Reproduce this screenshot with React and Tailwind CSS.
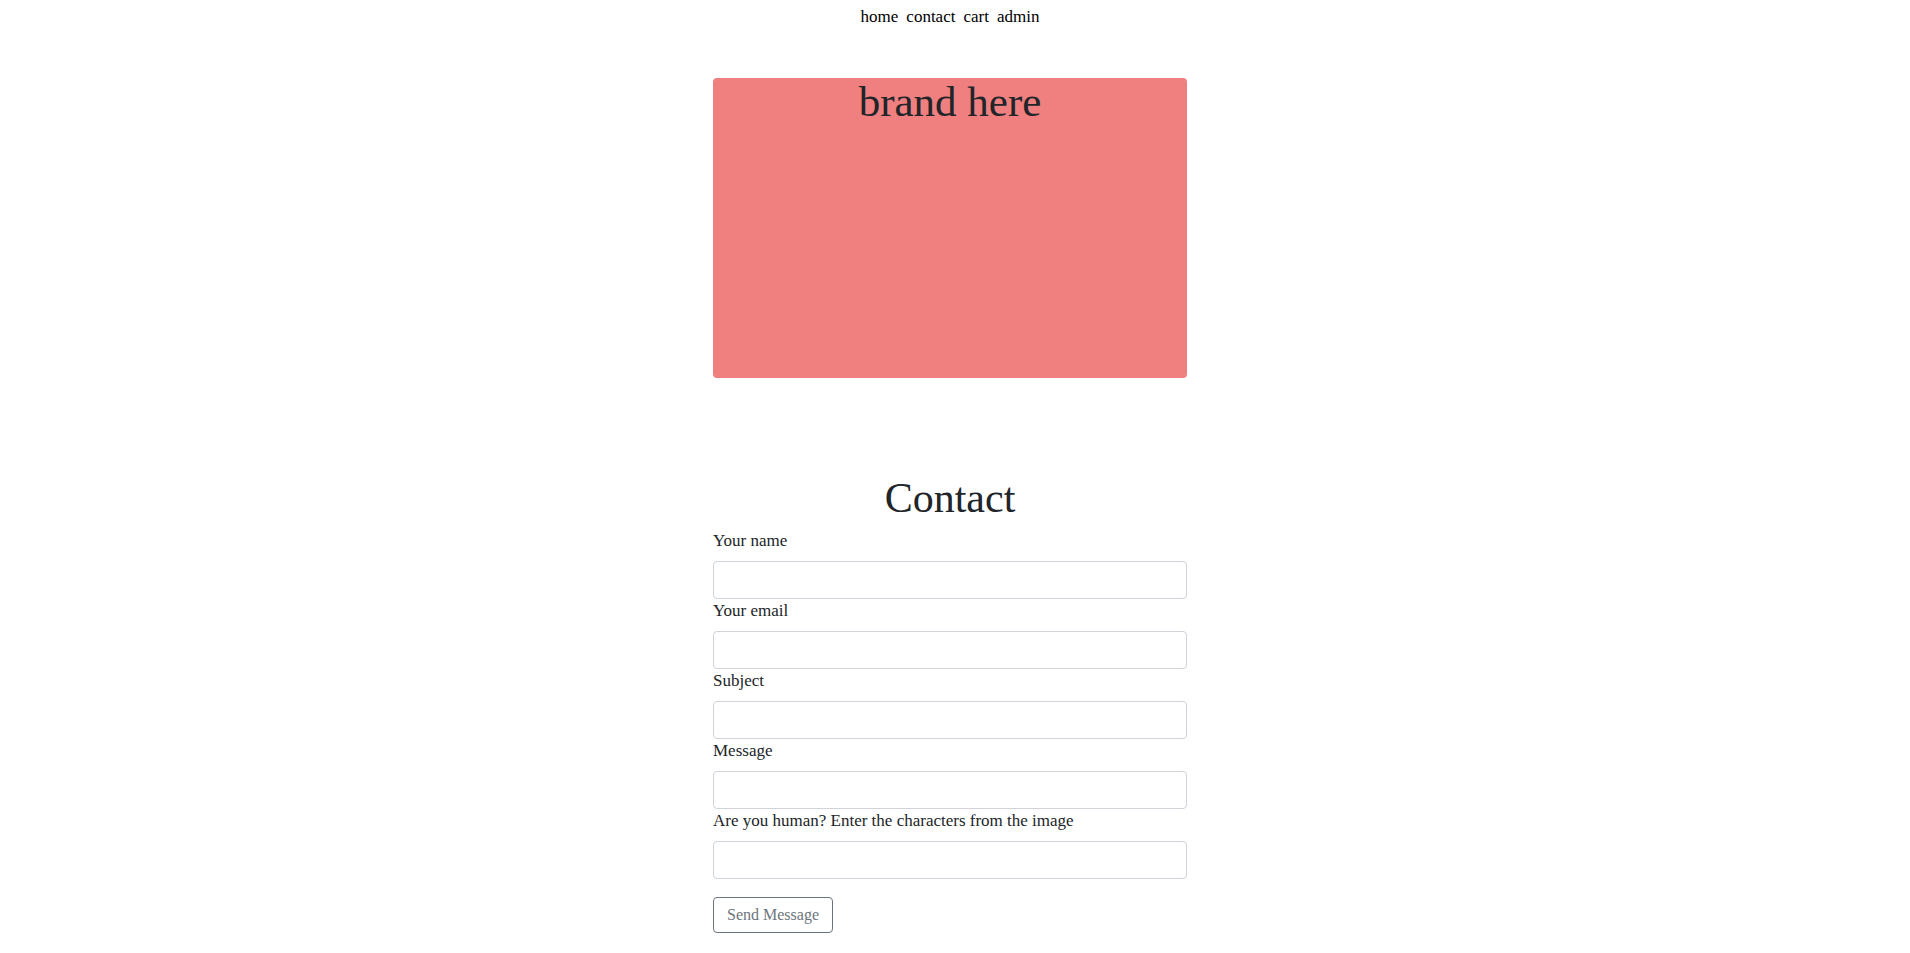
import React from "react";

const fields = [
  "Your name",
  "Your email",
  "Subject",
  "Message",
  "Are you human? Enter the characters from the image",
];

export default function App() {
  return (
    <div className="w-[1900px] min-h-[1125px] bg-white text-[#212529] font-['Liberation_Serif',serif]">
      {/* top nav */}
      <nav className="flex justify-center gap-2 pt-[5px] text-[17px] leading-6 text-black">
        <a href="#">home</a>
        <a href="#">contact</a>
        <a href="#">cart</a>
        <a href="#">admin</a>
      </nav>

      <main className="mx-auto w-[474px]">
        <div className="mt-[49px] h-[300px] rounded bg-[#f08080] text-center text-[43px] leading-[48px]">
          brand here
        </div>

        <section className="mt-[96px]">
          <h1 className="mb-[7px] text-center text-[42px] leading-[48px]">Contact</h1>
          <form onSubmit={(e) => e.preventDefault()}>
            {fields.map((label) => (
              <div key={label}>
                <label className="mb-2 block text-[17px] leading-6">{label}</label>
                <input
                  type="text"
                  className="block h-[38px] w-full rounded border border-[#ced4da] px-3"
                />
              </div>
            ))}
            <button
              type="submit"
              className="mt-[18px] h-[36px] rounded border border-[#6c757d] px-[13px] text-base text-[#6c757d]"
            >
              Send Message
            </button>
          </form>
        </section>
      </main>
    </div>
  );
}
